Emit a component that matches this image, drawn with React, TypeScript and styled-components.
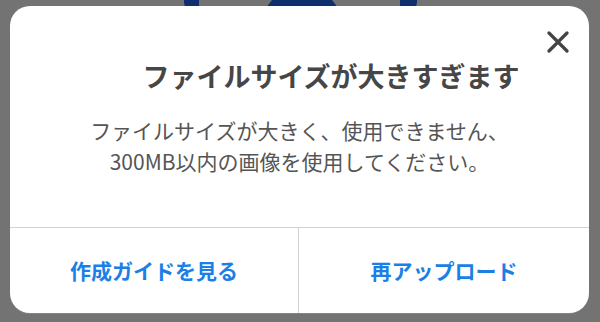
import React from "react";
import styled, { createGlobalStyle } from "styled-components";

const GlobalStyle = createGlobalStyle`
  html, body {
    margin: 0;
    padding: 0;
    background: #737373;
  }
  body {
    font-family: "Noto Sans CJK JP", "Noto Sans", sans-serif;
  }
`;

const Page = styled.div`
  position: relative;
  width: 600px;
  height: 322px;
  overflow: hidden;
  background: #737373;
`;

const BackArt = styled.svg`
  display: block;
  width: 600px;
  height: 20px;
`;

const Modal = styled.div`
  position: absolute;
  left: 10px;
  top: 6px;
  width: 579px;
  height: 307px;
  background: #ffffff;
  border-radius: 20px;
  display: flex;
  flex-direction: column;
  overflow: hidden;
  box-shadow: 0 1px 0 rgba(255, 255, 255, 0.12);
`;

const Content = styled.div`
  height: 222px;
  display: flex;
  flex-direction: column;
  align-items: center;
  padding-top: 52px;
  box-sizing: border-box;
  border-bottom: 1px solid #d2d2d2;
`;

const Title = styled.h2`
  margin: 0;
  align-self: stretch;
  padding-left: 63px;
  text-align: center;
  font-size: 27px;
  line-height: 35px;
  font-weight: 700;
  color: #464646;
`;

const Message = styled.p`
  margin: 22px 0 0;
  text-align: center;
  font-size: 21px;
  line-height: 31px;
  font-weight: 400;
  color: #555555;
`;

const CloseButton = styled.button`
  position: absolute;
  top: 20px;
  right: 15px;
  width: 32px;
  height: 32px;
  padding: 0;
  border: none;
  background: transparent;
  display: flex;
  align-items: center;
  justify-content: center;
  cursor: pointer;
`;

const Actions = styled.div`
  flex: 1;
  display: grid;
  grid-template-columns: 288px 1fr;
`;

const ActionButton = styled.button<{ $divider?: boolean }>`
  border: none;
  border-left: ${(p) => (p.$divider ? "1px solid #d2d2d2" : "none")};
  background: transparent;
  font-family: "Noto Sans CJK JP", "Noto Sans", sans-serif;
  font-size: 21px;
  font-weight: 700;
  color: #1b7fe6;
  padding: 0 0 2px;
  cursor: pointer;
`;

export default function App() {
  return (
    <>
      <GlobalStyle />
      <Page>
        <BackArt viewBox="0 0 600 20" aria-hidden="true">
          <path d="M184 0 H199 V10 H190 Q184 8 184 2 Z" fill="#0f2e6e" />
          <path d="M272 0 H332 Q336 4 338 10 H266 Q268 4 272 0 Z" fill="#0f2e6e" />
          <path d="M400 0 H417 V2 Q417 8 410 10 H400 Z" fill="#0f2e6e" />
        </BackArt>
        <Modal role="dialog">
          <CloseButton aria-label="閉じる">
            <svg width="22" height="22" viewBox="0 0 22 22">
              <path
                d="M2 2 L20 20 M20 2 L2 20"
                stroke="#444444"
                strokeWidth="3.2"
                strokeLinecap="round"
              />
            </svg>
          </CloseButton>
          <Content>
            <Title>ファイルサイズが大きすぎます</Title>
            <Message>
              ファイルサイズが大きく、使用できません、
              <br />
              300MB以内の画像を使用してください。
            </Message>
          </Content>
          <Actions>
            <ActionButton>作成ガイドを見る</ActionButton>
            <ActionButton $divider>再アップロード</ActionButton>
          </Actions>
        </Modal>
      </Page>
    </>
  );
}
